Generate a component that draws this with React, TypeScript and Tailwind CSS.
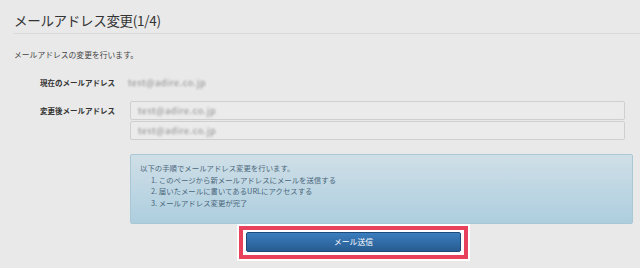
import React from "react"

const jp = { fontFamily: '"Noto Sans CJK JP", "Noto Sans", sans-serif' }

function Blurred({ text }: { text: string }) {
  return (
    <span className="inline-block text-[9px] tracking-[0.6px] text-[#8a8a8a] blur-[1.3px] select-none">{text}</span>
  )
}

export default function App() {
  return (
    <div style={jp} className="w-[640px] h-[268px] overflow-hidden bg-[#e9e9e9] text-[#333]">
      <div className="pl-[14px]">
        <div className="pt-[11px] pb-[3px] border-b border-[#d9d9d9]">
          <h1 className="text-[13.5px] leading-[19px] text-[#333] tracking-[-0.3px]">メールアドレス変更(1/4)</h1>
        </div>

        <p className="mt-[15px] text-[7.8px] leading-[12px] text-[#444]">メールアドレスの変更を行います。</p>

        <div className="mt-[12px] flex items-center h-[19px]">
          <div className="w-[114px] pl-[26px] text-[7.5px] font-bold text-[#333]">現在のメールアドレス</div>
          <div className="flex items-center">
            <Blurred text="test@adire.co.jp" />
          </div>
        </div>

        <div className="mt-[9px] flex">
          <div className="w-[116px] pl-[26px] h-[19px] flex items-center text-[7.5px] font-bold text-[#333]">
            変更後メールアドレス
          </div>
          <div className="flex flex-col gap-[1px] w-[495px]">
            <div className="h-[19px] border border-[#cfcfcf] rounded-[2px] bg-[#ebebeb] flex items-center pl-[7px]">
              <Blurred text="test@adire.co.jp" />
            </div>
            <div className="h-[19px] border border-[#cfcfcf] rounded-[2px] bg-[#ebebeb] flex items-center pl-[7px]">
              <Blurred text="test@adire.co.jp" />
            </div>
          </div>
        </div>

        <div className="mt-[14px] ml-[116px] w-[503px] h-[70px] rounded-[2px] border border-[#a8c8d6] bg-gradient-to-b from-[#cfdfe7] to-[#adcedf] pt-[7px] pl-[9px] text-[7.4px] leading-[11.7px] text-[#4a667b]">
          <p>以下の手順でメールアドレス変更を行います。</p>
          <ol className="pl-[11px]">
            <li>1.&nbsp;このページから新メールアドレスにメールを送信する</li>
            <li>2.&nbsp;届いたメールに書いてあるURLにアクセスする</li>
            <li>3.&nbsp;メールアドレス変更が完了</li>
          </ol>
        </div>

        <div className="ml-[223px] w-[233px] bg-white p-[2px]">
          <div className="border-[4px] border-[#e8415b] bg-white px-[3px] pt-[2px] pb-[3px]">
            <button className="w-full h-[20px] rounded-[2px] border border-[#1d4a78] bg-gradient-to-b from-[#3c7ebe] to-[#285c92] text-white text-[7.8px] flex items-center justify-center">
              メール送信
            </button>
          </div>
        </div>
      </div>
    </div>
  )
}
